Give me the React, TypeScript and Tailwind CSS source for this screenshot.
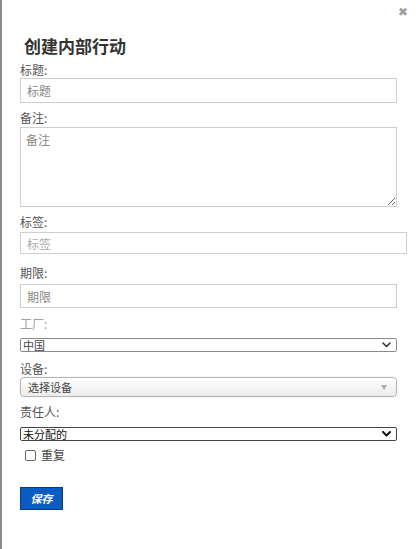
import React from 'react';

const font = { fontFamily: '"Noto Sans CJK SC", "Noto Sans", sans-serif' };

const Chevron: React.FC<{ dark?: boolean }> = ({ dark }) => (
    <svg
        className="pointer-events-none absolute right-[6px] top-1/2 -translate-y-1/2"
        width="9"
        height="6"
        viewBox="0 0 9 6"
        fill="none"
    >
        <path
            d="M1 1 L4.5 4.5 L8 1"
            stroke={dark ? '#111' : '#333'}
            strokeWidth={dark ? 2 : 1.6}
            strokeLinecap="round"
            strokeLinejoin="round"
        />
    </svg>
);

const App: React.FC = () => {
    return (
        <div
            className="relative min-h-[549px] w-[417px] border-l-2 border-[#8c8c8c] bg-white text-[#444]"
            style={font}
        >
            <button className="absolute right-[9px] top-[4px] text-[12px] leading-[14px] text-[#a0a0a0]">
                ✖
            </button>

            <h1 className="pl-[22px] pt-[34px] text-[17px] font-bold leading-[24px] text-[#333]">
                创建内部行动
            </h1>

            <form className="flex flex-col pl-[18px]" onSubmit={(e) => e.preventDefault()}>
                <label className="mt-[4px] text-[12px] leading-[16px] text-[#555]" htmlFor="title">
                    标题:
                </label>
                <input
                    id="title"
                    className="h-[25px] w-[377px] border border-[#cfcfcf] px-[6px] text-[12px] text-[#555] outline-none placeholder:text-[#888]"
                    placeholder="标题"
                />

                <label className="mt-[7px] text-[12px] leading-[16px] text-[#555]" htmlFor="notes">
                    备注:
                </label>
                <textarea
                    id="notes"
                    className="mt-[1px] h-[80px] w-[377px] border border-[#cfcfcf] px-[5px] pt-[3px] text-[12px] text-[#555] outline-none placeholder:text-[#888]"
                    placeholder="备注"
                />

                <label className="mt-[7px] text-[12px] leading-[16px] text-[#555]" htmlFor="tags">
                    标签:
                </label>
                <input
                    id="tags"
                    className="mt-[2px] h-[22px] w-[387px] border border-[#cfcfcf] px-[6px] text-[12px] text-[#555] outline-none placeholder:text-[#aaa]"
                    placeholder="标签"
                />

                <label className="mt-[11px] text-[12px] leading-[16px] text-[#555]" htmlFor="deadline">
                    期限:
                </label>
                <input
                    id="deadline"
                    className="mt-[3px] h-[24px] w-[377px] border border-[#cfcfcf] px-[6px] text-[12px] text-[#555] outline-none placeholder:text-[#888]"
                    placeholder="期限"
                />

                <label className="mt-[8px] text-[12px] leading-[16px] text-[#a0a0a0]" htmlFor="plant">
                    工厂:
                </label>
                <div className="relative mt-[6px] w-[377px]">
                    <select
                        id="plant"
                        className="block h-[14px] w-full appearance-none rounded-[2px] border border-[#8a8a8a] bg-white pl-[2px] text-[11px] leading-[12px] text-[#444] outline-none"
                    >
                        <option>中国</option>
                    </select>
                    <Chevron />
                </div>

                <label className="mt-[9px] text-[12px] leading-[16px] text-[#555]">设备:</label>
                <div className="relative flex h-[20px] w-[377px] items-center rounded-[4px] border border-[#b4b4b4] bg-gradient-to-b from-white to-[#ececec] pl-[7px] text-[11px] text-[#444] shadow-[0_0_3px_rgba(0,0,0,0.08)]">
                    选择设备
                    <span className="absolute right-[9px] top-[5px] text-[6px] leading-[8px] text-[#aaa]">▼</span>
                </div>

                <label className="mt-[7px] text-[12px] leading-[16px] text-[#555]" htmlFor="owner">
                    责任人:
                </label>
                <div className="relative mt-[7px] w-[377px]">
                    <select
                        id="owner"
                        className="block h-[14px] w-full appearance-none rounded-[2px] border border-[#444] bg-white pl-[2px] text-[11px] leading-[12px] text-[#111] outline-none"
                    >
                        <option>未分配的</option>
                    </select>
                    <Chevron dark />
                </div>

                <label className="mt-[7px] flex h-[14px] items-center gap-[5px] pl-[5px] text-[12px] text-[#444]">
                    <input
                        type="checkbox"
                        className="h-[11px] w-[11px] appearance-none rounded-[2px] border border-[#666] bg-white"
                    />
                    重复
                </label>

                <div className="mt-[22px]">
                    <button
                        type="submit"
                        className="h-[23px] w-[43px] border border-[#0c3c78] bg-[#0a5bc2] text-[11px] font-bold italic text-white"
                    >
                        保存
                    </button>
                </div>
            </form>
        </div>
    );
};

export default App;
